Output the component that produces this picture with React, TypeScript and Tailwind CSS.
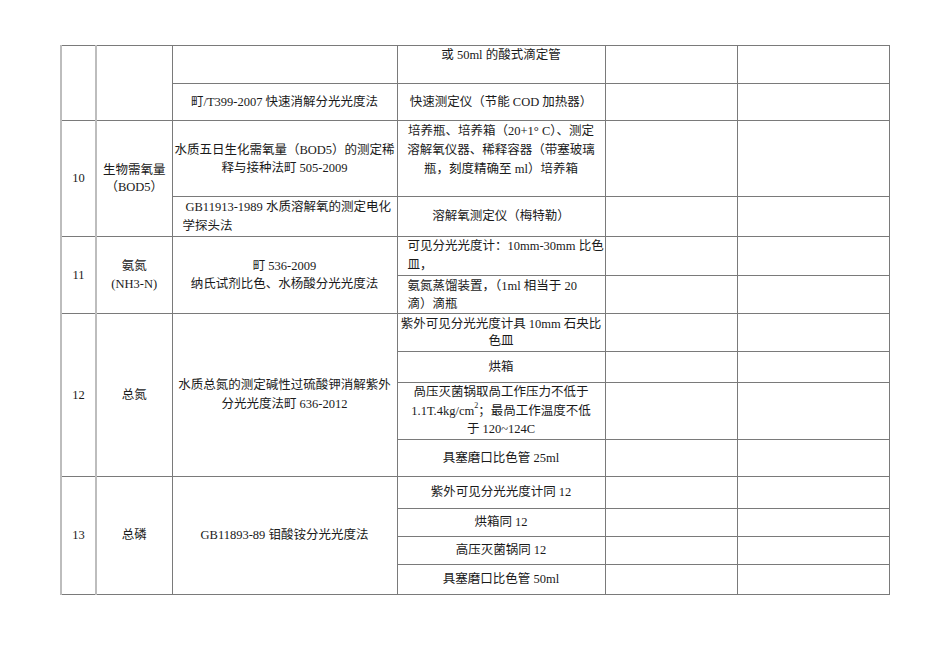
import React from "react";

const td = "border border-[#7a7a7a] p-0 text-[12.5px] leading-[19px] text-[#1a1a1a] whitespace-nowrap overflow-visible";
const light = "border-l-2 border-l-[#bdbdbd]";

// each line in a fixed-height block so mixed fonts can't stretch the row
function Lines({ lines, lh = "h-[19px] leading-[19px]" }: { lines: React.ReactNode[]; lh?: string }) {
  return (
    <>
      {lines.map((l, i) => (
        <div key={i} className={`${lh} overflow-visible`}>
          {l}
        </div>
      ))}
    </>
  );
}

function Empty() {
  return (
    <>
      <td className={td}></td>
      <td className={td}></td>
    </>
  );
}

export default function App() {
  return (
    <div
      className="w-[950px] h-[672px] bg-white pt-[45px] pl-[60px]"
      style={{ fontFamily: '"Liberation Serif", "Noto Sans CJK SC", serif' }}
    >
      <table className="table-fixed border-collapse w-[828px]">
        <colgroup>
          <col className="w-[35px]" />
          <col className="w-[76px]" />
          <col className="w-[225px]" />
          <col className="w-[208px]" />
          <col className="w-[132px]" />
          <col className="w-[152px]" />
        </colgroup>
        <tbody>
          {/* 9 续 */}
          <tr className="h-[38px]">
            <td rowSpan={2} className={`${td} ${light}`}></td>
            <td rowSpan={2} className={`${td} ${light}`}></td>
            <td className={td}></td>
            <td className={`${td} text-center align-top`}>
              <Lines lines={["或 50ml 的酸式滴定管"]} />
            </td>
            <Empty />
          </tr>
          <tr className="h-[37px]">
            <td className={`${td} text-center align-middle`}>
              <Lines lines={["町/T399-2007 快速消解分光光度法"]} />
            </td>
            <td className={`${td} text-center align-middle`}>
              <Lines lines={["快速测定仪（节能 COD 加热器）"]} />
            </td>
            <Empty />
          </tr>

          {/* 10 */}
          <tr className="h-[76px]">
            <td rowSpan={2} className={`${td} ${light} text-center align-middle`}>
              <Lines lines={["10"]} />
            </td>
            <td rowSpan={2} className={`${td} ${light} text-center align-middle`}>
              <Lines lh="h-[17px] leading-[17px]" lines={["生物需氧量", "（BOD5）"]} />
            </td>
            <td className={`${td} text-center align-middle`}>
              <Lines lh="h-[18px] leading-[18px]" lines={["水质五日生化需氧量（BOD5）的测定稀", "释与接种法町 505-2009"]} />
            </td>
            <td className={`${td} text-center align-top pt-px`}>
              <Lines
                lines={["培养瓶、培养箱（20+1° C）、测定", "溶解氧仪器、稀释容器（带塞玻璃", "瓶，刻度精确至 ml）培养箱"]}
              />
            </td>
            <Empty />
          </tr>
          <tr className="h-[40px]">
            <td className={`${td} align-top pt-[1px] pl-[10px] text-left`}>
              <Lines lh="h-[19px] leading-[19px]" lines={[<span className="pl-[3px]">GB11913-1989 水质溶解氧的测定电化</span>, "学探头法"]} />
            </td>
            <td className={`${td} text-center align-middle`}>
              <Lines lines={["溶解氧测定仪（梅特勒）"]} />
            </td>
            <Empty />
          </tr>

          {/* 11 */}
          <tr className="h-[38px]">
            <td rowSpan={2} className={`${td} ${light} text-center align-middle`}>
              <Lines lines={["11"]} />
            </td>
            <td rowSpan={2} className={`${td} ${light} text-center align-middle`}>
              <Lines lh="h-[18px] leading-[18px]" lines={["氨氮", "(NH3-N)"]} />
            </td>
            <td rowSpan={2} className={`${td} text-center align-middle`}>
              <Lines lh="h-[18px] leading-[18px]" lines={["町 536-2009", "纳氏试剂比色、水杨酸分光光度法"]} />
            </td>
            <td className={`${td} text-left align-top pl-[10px]`}>
              <Lines lines={["可见分光光度计：10mm-30mm 比色", "皿，"]} />
            </td>
            <Empty />
          </tr>
          <tr className="h-[38px]">
            <td className={`${td} text-left align-top pt-[1px] pl-[10px]`}>
              <Lines lh="h-[18px] leading-[18px]" lines={["氨氮蒸馏装置，（1ml 相当于 20", "滴）滴瓶"]} />
            </td>
            <Empty />
          </tr>

          {/* 12 */}
          <tr className="h-[38px]">
            <td rowSpan={4} className={`${td} ${light} text-center align-middle`}>
              <Lines lines={["12"]} />
            </td>
            <td rowSpan={4} className={`${td} ${light} text-center align-middle`}>
              <Lines lines={["总氮"]} />
            </td>
            <td rowSpan={4} className={`${td} text-center align-middle`}>
              <Lines lines={["水质总氮的测定碱性过硫酸钾消解紫外", "分光光度法町 636-2012"]} />
            </td>
            <td className={`${td} text-center align-middle`}>
              <Lines lh="h-[17px] leading-[17px]" lines={["紫外可见分光光度计具 10mm 石央比", "色皿"]} />
            </td>
            <Empty />
          </tr>
          <tr className="h-[31px]">
            <td className={`${td} text-center align-middle`}>
              <Lines lines={["烘箱"]} />
            </td>
            <Empty />
          </tr>
          <tr className="h-[57px]">
            <td className={`${td} text-center align-middle`}>
              <Lines
                lh="h-[18.5px] leading-[18.5px]"
                lines={[
                  "咼压灭菌锅取咼工作压力不低于",
                  <>
                    1.1T.4kg/cm<span className="text-[8px] leading-none align-top">2</span>；最咼工作温度不低
                  </>,
                  "于 120~124C",
                ]}
              />
            </td>
            <Empty />
          </tr>
          <tr className="h-[37px]">
            <td className={`${td} text-center align-middle`}>
              <Lines lines={["具塞磨口比色管 25ml"]} />
            </td>
            <Empty />
          </tr>

          {/* 13 */}
          <tr className="h-[32px]">
            <td rowSpan={4} className={`${td} ${light} text-center align-middle`}>
              <Lines lines={["13"]} />
            </td>
            <td rowSpan={4} className={`${td} ${light} text-center align-middle`}>
              <Lines lines={["总磷"]} />
            </td>
            <td rowSpan={4} className={`${td} text-center align-middle`}>
              <Lines lines={["GB11893-89 钼酸铵分光光度法"]} />
            </td>
            <td className={`${td} text-center align-middle`}>
              <Lines lines={["紫外可见分光光度计同 12"]} />
            </td>
            <Empty />
          </tr>
          <tr className="h-[28px]">
            <td className={`${td} text-center align-middle`}>
              <Lines lines={["烘箱同 12"]} />
            </td>
            <Empty />
          </tr>
          <tr className="h-[28px]">
            <td className={`${td} text-center align-middle`}>
              <Lines lines={["高压灭菌锅同 12"]} />
            </td>
            <Empty />
          </tr>
          <tr className="h-[30px]">
            <td className={`${td} text-center align-middle`}>
              <Lines lines={["具塞磨口比色管 50ml"]} />
            </td>
            <Empty />
          </tr>
        </tbody>
      </table>
    </div>
  );
}
